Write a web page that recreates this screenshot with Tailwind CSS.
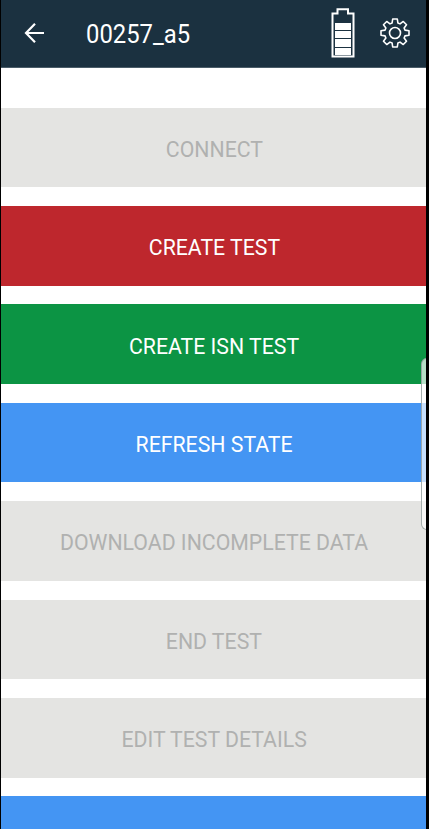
<!DOCTYPE html>
<html lang="en">

<head>
  <meta charset="utf-8">
  <title>00257_a5</title>
  <script src="https://cdn.jsdelivr.net/npm/@tailwindcss/browser@4"></script>
</head>

<body class="bg-black font-['Roboto',sans-serif]">
  <div class="relative h-[829px] w-[425px] ml-px bg-white overflow-hidden">
    <header class="flex items-center h-[68px] bg-[#1b3140] border-b border-[#4b5d69] text-white">
      <svg class="ml-[23px] -mt-px w-[22px] h-[22px] shrink-0" viewBox="0 0 22 22" fill="none" stroke="#fff" stroke-width="2.2">
        <path d="M20 11H2.5M11 1.8L2 11l9 9.2" />
      </svg>
      <h1 class="ml-[40px] mt-px w-[110px] text-[26px] leading-none whitespace-nowrap origin-left scale-x-[.917]">00257_a5</h1>
      <!-- battery -->
      <svg class="ml-[135px] -mt-px w-[24px] h-[50px] shrink-0" viewBox="0 0 24 50">
        <path d="M1.5 48.5V5.5h5V1.2h10.500V5.500h5.500v43z" fill="none" stroke="#fff" stroke-width="2" />
        <path d="M4 15h16v7H4zM4 23h16v7H4zM4 31h16v8H4zM4 40h16v7H4z" fill="#fff" />
      </svg>
      <!-- settings -->
      <svg class="ml-[25px] -mt-px w-[30px] h-[30px] shrink-0" viewBox="-15 -15 30 30" fill="none" stroke="#fff" stroke-width="1.6" stroke-linejoin="round">
        <path d="M-2.9-10L-2.3-14H2.3L2.9-10 5.02-9.12 8.27-11.53 11.53-8.27 9.12-5.02 10-2.9 14-2.3V2.3L10 2.9 9.12 5.02 11.53 8.27 8.27 11.53 5.02 9.12 2.9 10 2.3 14H-2.3L-2.9 10-5.02 9.12-8.27 11.53-11.53 8.27-9.12 5.02-10 2.9-14 2.3V-2.3L-10-2.9-9.12-5.02-11.53-8.27-8.27-11.53-5.02-9.12z" />
        <circle r="5.5" />
      </svg>
    </header>

    <main class="flex flex-col gap-[18.8px] pt-[39.7px] text-[22.5px] text-white text-center whitespace-nowrap">
      <button class="h-[79.6px] shrink-0 pt-[4.6px] bg-[#e4e4e2] text-[#b0b1b0]"><span class="inline-block ml-px scale-x-[.945]">CONNECT</span></button>
      <button class="h-[79.6px] shrink-0 pt-[4.6px] bg-[#be272d]"><span class="inline-block ml-px scale-x-[.945]">CREATE TEST</span></button>
      <button class="h-[79.6px] shrink-0 pt-[4.6px] bg-[#0c9444]"><span class="inline-block ml-[2px] scale-x-[.945]">CREATE ISN TEST</span></button>
      <button class="h-[79.6px] shrink-0 pt-[4.6px] bg-[#4495f3]"><span class="inline-block ml-[2px] scale-x-[.945]">REFRESH STATE</span></button>
      <button class="h-[79.6px] shrink-0 pt-[4.6px] bg-[#e4e4e2] text-[#b0b1b0]"><span class="inline-block ml-[2px] scale-x-[.945]">DOWNLOAD INCOMPLETE DATA</span></button>
      <button class="h-[79.6px] shrink-0 pt-[4.6px] bg-[#e4e4e2] text-[#b0b1b0]"><span class="inline-block ml-px scale-x-[.945]">END TEST</span></button>
      <button class="h-[79.6px] shrink-0 pt-[4.6px] bg-[#e4e4e2] text-[#b0b1b0]"><span class="inline-block ml-px scale-x-[.945]">EDIT TEST DETAILS</span></button>
      <button class="h-[79.6px] shrink-0 bg-[#4495f3]"></button>
    </main>

    <!-- edge panel handle -->
    <div class="absolute left-[420px] top-[358px] w-3 h-[172px] rounded-l-[6px] border border-[#8f9a98]/80 bg-white/70"></div>
  </div>
</body>

</html>
